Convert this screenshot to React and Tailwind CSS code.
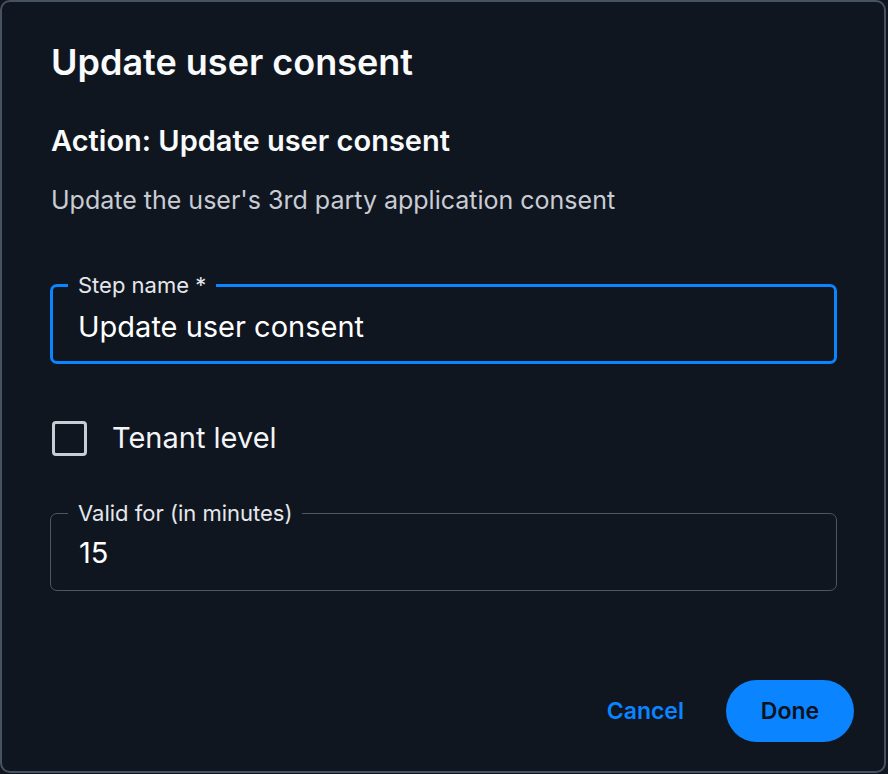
import { useState } from 'react';

const Field = ({ label, value, focused }) => (
  <fieldset
    className={`rounded-[7px] px-[26px] ${
      focused ? 'h-[91px] border-[3px] border-[#0a84ff]' : 'h-[90px] border-[1.5px] border-[#4b5563]'
    }`}
  >
    <legend className={`px-[10px] text-[22px] leading-[24px] text-[#e5e7eb] ${focused ? '-ml-[11px]' : '-ml-[9px]'}`}>
      {label}
    </legend>
    <div className={`text-[29px] leading-[34px] text-white ${focused ? 'pt-[13px] -ml-[1px]' : 'pt-[11px] ml-[2px]'}`}>
      {value}
    </div>
  </fieldset>
);

const App = () => {
  const [checked, setChecked] = useState(false);

  return (
    <div className="h-[774px] w-[888px] bg-[#0f1620]" style={{ fontFamily: 'Inter, "Noto Sans", sans-serif' }}>
      <div className="flex h-[773px] w-[886px] flex-col rounded-[10px] border-2 border-[#465260] bg-[#0f1620] pl-[48px] pr-[47px] pt-[36px]">
        <h1 className="ml-[1px] text-[36px] font-semibold leading-[48px] text-[#f9fafb]">Update user consent</h1>
        <h2 className="ml-[1px] mt-[37px] text-[29px] font-semibold leading-[36px] text-[#f9fafb]">Action: Update user consent</h2>
        <p className="ml-[1px] mt-[25px] text-[25px] leading-[32px] text-[#c9ccd3]">Update the user's 3rd party application consent</p>

        <div className="mt-[57px]">
          <Field label="Step name *" value="Update user consent" focused />
        </div>

        <label className="mt-[56px] flex cursor-pointer items-center gap-[25px]">
          <span
            onClick={() => setChecked(!checked)}
            className="ml-[2px] h-[35px] w-[35px] rounded-[4px] border-[3px] border-[#c9ccd3]"
          />
          <span className="text-[29px] leading-[36px] text-[#f3f4f6]">Tenant level</span>
        </label>

        <div className="mt-[45px]">
          <Field label="Valid for (in minutes)" value="15" />
        </div>

        <div className="mt-auto mb-[29px] flex items-center justify-end gap-[42px] -mr-[17px]">
          <button className="text-[23px] font-semibold text-[#0a84ff]">Cancel</button>
          <button className="h-[62px] w-[128px] rounded-full bg-[#0a84ff] text-[23px] font-semibold text-[#0b1320]">
            Done
          </button>
        </div>
      </div>
    </div>
  );
};

export default App;
